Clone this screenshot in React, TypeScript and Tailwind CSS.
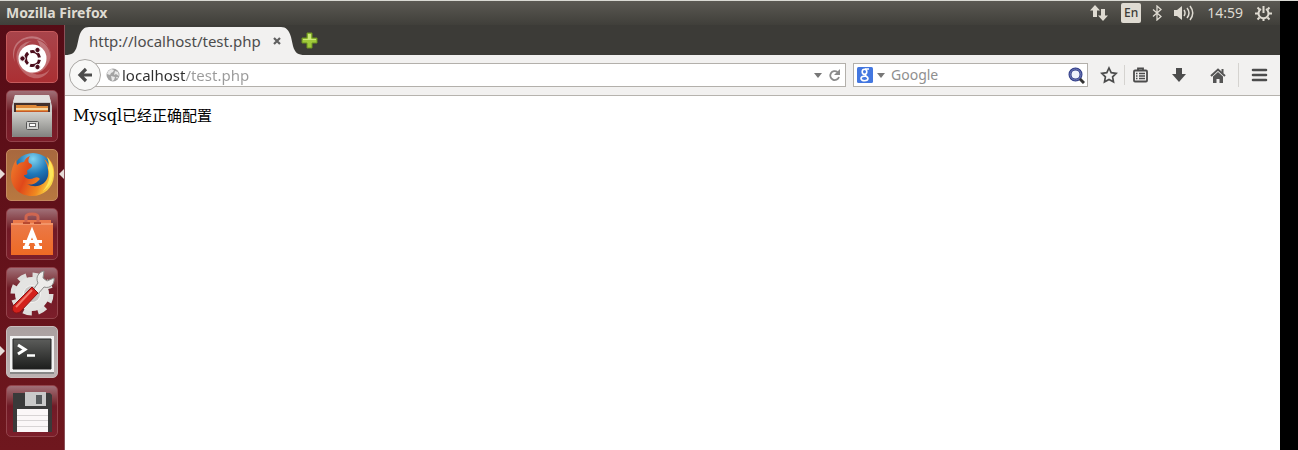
import type { ReactNode } from 'react';

const tileBase = 'relative flex h-13 w-13 items-center justify-center rounded-[5px] border';
const glass = `${tileBase} border-[#93434b] bg-linear-to-b from-[#a07078] via-[#701a26] via-40% to-[#7c1e2a]`;

const launcherItems: { label: string; tile: string; marks?: 'left' | 'both'; icon: ReactNode }[] = [
  {
    label: 'Search your computer',
    tile: `${tileBase} border-[#c65a5c] bg-linear-to-b from-[#a8444b] to-[#ab2f33]`,
    icon: (
      <svg width="50" height="50" viewBox="0 0 50 50" fill="none" aria-hidden="true">
        {/* Swirl */}
        <path d="M8 30C4 15 14 4 29 7c12 2 18 13 13 25C48 16 35 1 20 5 8 8 3 19 8 30Z" fill="#fff" opacity=".28" />
        <path d="M13 36C5 24 11 10 25 9c-10 3-13 15-5 27 5 8 16 9 23 1-7 14-23 11-30-1Z" fill="#fff" opacity=".25" />
        <path d="M30 8c12 3 18 17 9 27-5 7-14 8-21 4 14 2 22-16 12-31Z" fill="#fff" opacity=".28" />
        <circle cx="25.500" cy="26.500" r="14" fill="#fff" />
        {/* Circle of friends */}
        <circle cx="25.500" cy="26.500" r="7" stroke="#4b0d1c" strokeWidth="3" strokeDasharray="12.200 2.460" strokeDashoffset="-1.200" />
        <g fill="#4b0d1c" stroke="#fff" strokeWidth="1">
          <circle cx="15.500" cy="26.500" r="2.700" />
          <circle cx="30.500" cy="18" r="2.700" />
          <circle cx="30.500" cy="35" r="2.700" />
        </g>
      </svg>
    ),
  },
  {
    label: 'Files',
    tile: glass,
    icon: (
      <svg width="50" height="50" viewBox="0 0 50 50" aria-hidden="true">
        <defs>
          <linearGradient id="cabinet" x1="0" y1="0" x2="0" y2="1">
            <stop offset="0" stopColor="#d0d0cc" />
            <stop offset="1" stopColor="#82827f" />
          </linearGradient>
        </defs>
        <path d="M8 4h34l3 11v31H5V15Z" fill="#c9c7c6" />
        <path d="M8 4h34l2 7H6Z" fill="#e2e0df" />
        <path d="M7 12h36v10H7Z" fill="#43302c" />
        <path d="M9 14h20l1 1h11v7H9Z" fill="#df8a3a" />
        <path d="M9 17h32v2H9Z" fill="#f5d7a4" />
        <path d="M9 20h32v2H9Z" fill="#c65a28" />
        <rect x="5" y="21" width="40" height="25" rx="1" fill="url(#cabinet)" />
        <rect x="19.500" y="30.500" width="12" height="8" rx="1" fill="#d4d4d2" stroke="#555" />
        <rect x="22.500" y="32.500" width="6" height="3" fill="#fff" stroke="#666" />
      </svg>
    ),
  },
  {
    label: 'Firefox',
    tile: `${tileBase} border-[#c58a60] bg-linear-to-b from-[#a8683e] to-[#b87840]`,
    marks: 'both',
    icon: (
      <svg width="50" height="50" viewBox="0 0 50 50" aria-hidden="true">
        <defs>
          <radialGradient id="globe" cx=".5" cy=".15" r=".75">
            <stop offset="0" stopColor="#7fd4f0" />
            <stop offset=".5" stopColor="#1f78b8" />
            <stop offset="1" stopColor="#123a78" />
          </radialGradient>
          <linearGradient id="fox" x1="0" y1=".2" x2="1" y2=".6">
            <stop offset="0" stopColor="#ee7a2a" />
            <stop offset=".4" stopColor="#e0481a" />
            <stop offset=".75" stopColor="#f08a20" />
            <stop offset="1" stopColor="#fbe04a" />
          </linearGradient>
        </defs>
        <circle cx="26" cy="23" r="20" fill="url(#globe)" />
        {/* Fox body and tail */}
        <path d="M40 7c5 4 8 10 7 19-1 12-10 20-22 20C12 46 4 37 4 26c0-6 2-11 5-16l1 5c2-2 4-3 7-3 1-3 3-5 6-6-2 3-2 5-1 7 2 1 3 1 3 3 0 2-4 3-5 5 1 3 0 4-3 4 0 2 3 4 6 4 4 0 6-3 9-1 2 1-1 3-2 4-4 3-7 3-10 2 9 5 19 1 21-8 1-6-1-13-4-17 3 2 4 4 5 7 1-4 0-6-2-9Z" fill="url(#fox)" />
        <path d="M40 7c4 4 7 10 6 18-1 8-5 13-10 16 6-7 8-15 5-23 1-4 1-7-1-11Z" fill="#fde65a" />
      </svg>
    ),
  },
  {
    label: 'Ubuntu Software Center',
    tile: glass,
    icon: (
      <svg width="50" height="50" viewBox="0 0 50 50" fill="none" aria-hidden="true">
        <defs>
          <linearGradient id="bag" x1="0" y1="0" x2="0" y2="1">
            <stop offset="0" stopColor="#ea7a4c" />
            <stop offset="1" stopColor="#ee6a24" />
          </linearGradient>
        </defs>
        <path d="M6 11h38v3h2v32H4V14h2Z" fill="url(#bag)" />
        <path d="M4 14h42v2H4Z" fill="#f29468" />
        <path d="M19 15V8c0-4 12-4 12 0v7" stroke="#cf6650" strokeWidth="3" />
        <path d="M16 14h7M27 14h7" stroke="#b84a30" strokeWidth="2" />
        <path d="m19 38 6-15 6 15" stroke="#fff" strokeWidth="4" />
        <path d="M16 31h19v3H16ZM16 37h7v3h-7ZM27 37h8v3h-8Z" fill="#fff" />
      </svg>
    ),
  },
  {
    label: 'System Settings',
    tile: glass,
    icon: (
      <svg width="50" height="50" viewBox="0 0 50 50" fill="none" aria-hidden="true">
        <circle cx="25" cy="26" r="18" stroke="#dededc" strokeWidth="7" strokeDasharray="8.137 6" />
        <circle cx="25" cy="26" r="13" fill="#f2f2f0" stroke="#e4e4e2" strokeWidth="8" />
        <circle cx="25" cy="26" r="8" fill="#c9c6c5" />
        {/* Wrench */}
        <path d="m26 22 5-7c-3-6 1-11 6-12l-1 7 4 3 7-3c1 6-4 11-10 9l-6 7Z" fill="#ececea" stroke="#8c8c8a" />
        <path d="m25 19 6 6L13 44c-5 3-9-1-7-6Z" fill="#d3211c" stroke="#8e1414" />
        <path d="M25 22 9 39" stroke="#f37a6c" strokeWidth="2" />
      </svg>
    ),
  },
  {
    label: 'Terminal',
    tile: `${tileBase} border-[#c9bcbc] bg-linear-to-b from-[#aaa0a0] to-[#bdb3b3]`,
    marks: 'left',
    icon: (
      <svg width="50" height="50" viewBox="0 0 50 50" fill="none" aria-hidden="true">
        <defs>
          <linearGradient id="screen" x1="0" y1="0" x2="0" y2="1">
            <stop offset="0" stopColor="#5c5d5b" />
            <stop offset="1" stopColor="#1d1e1d" />
          </linearGradient>
        </defs>
        <path d="M3 44h44v3H3Z" fill="#888" />
        <path d="M3 9h44v36H3Z" fill="#f2f2f2" />
        <path d="M6 12h38v30H6Z" fill="url(#screen)" stroke="#222" />
        <path d="m11 18 7 4.500L11 27" stroke="#fff" strokeWidth="3" />
        <path d="M20 28.500h8" stroke="#fff" strokeWidth="2.500" />
      </svg>
    ),
  },
  {
    label: 'Floppy Disk',
    tile: glass,
    icon: (
      <svg width="50" height="50" viewBox="0 0 50 50" aria-hidden="true">
        <path d="M6 7h37l2 2v37H6Z" fill="#3a3a3a" />
        <path d="M18 6h21v14H18Z" fill="#c9c9c9" />
        <path d="M29 9h6v9h-6Z" fill="#565a5c" />
        <path d="M10 23h31v23H10Z" fill="#fbf7f8" />
        <path d="M10 29.500h31M10 34.500h31M10 40.500h31" stroke="#d8d4d5" />
      </svg>
    ),
  },
];

function TopPanel() {
  return (
    <header className="flex h-6 items-center justify-between bg-linear-to-b from-[#5b5953] to-[#403f3a] pr-2 pl-1.5 text-[#dfdbd2]">
      <h1 className="text-[14px] leading-5 font-bold">Mozilla Firefox</h1>
      <div className="flex items-center text-[14px] leading-5">
        <button aria-label="Network" className="mr-3">
          <svg width="20" height="18" viewBox="0 0 20 18" fill="currentColor" className="block">
            <path d="M6 1 11 6.500H8V13H4V6.500H1ZM14 17 9 11.500h3V5h4v6.500h3Z" />
          </svg>
        </button>
        <button className="mr-2 h-5 w-5 rounded-xs bg-[#dfdbd2] text-[12px] leading-5 font-medium text-[#3c3b37]">En</button>
        <button aria-label="Bluetooth" className="mr-2">
          <svg width="16" height="16" viewBox="0 0 16 16" fill="none" stroke="currentColor" strokeWidth="1.300" className="block">
            <path d="m4 4.500 8 7L8 15V1l4 3.500-8 7" />
          </svg>
        </button>
        <button aria-label="Volume" className="mr-3">
          <svg width="22" height="18" viewBox="0 0 22 18" fill="none" stroke="currentColor" strokeWidth="1.500" className="block">
            <path d="M1 6h3l5-4v14l-5-4H1Z" fill="currentColor" stroke="none" />
            <path d="M11 6q2 3 0 6M14 4q4 5 0 10M17 2q5.500 7 0 14" />
          </svg>
        </button>
        <time className="mr-3">14:59</time>
        <button aria-label="Session">
          <svg width="17" height="16" viewBox="0 0 17 16" fill="none" stroke="currentColor" strokeWidth="2" className="block">
            <path d="M6 4a5 5 0 1 0 5 0M8.500 1v7" />
            <path d="M0 8.500h3M14 8.500h3M2.500 2.500l2 2M14.500 2.500l-2 2M2.500 14.500l2-2M14.500 14.500l-2-2M8.500 13v3" />
          </svg>
        </button>
      </div>
    </header>
  );
}

function Launcher() {
  return (
    <nav aria-label="Launcher" className="w-[65px] shrink-0 border-r border-[#8a5058] bg-linear-to-b from-[#560c16] to-[#6f171e] pt-1.5">
      <ul className="flex flex-col gap-[7px]">
        {launcherItems.map(({ label, tile, marks, icon }) => (
          <li key={label} className="relative px-1.5">
            <button aria-label={label} className={tile}>{icon}</button>
            {marks && (
              <svg width="5" height="10" viewBox="0 0 5 10" fill="#e6dcd8" className="absolute top-5 left-0" aria-hidden="true">
                <path d="M0 0 5 5 0 10Z" />
              </svg>
            )}
            {marks === 'both' && (
              <svg width="5" height="10" viewBox="0 0 5 10" fill="#e6dcd8" className="absolute top-5 right-0" aria-hidden="true">
                <path d="M5 0v10L0 5Z" />
              </svg>
            )}
          </li>
        ))}
      </ul>
    </nav>
  );
}

function TabStrip() {
  return (
    <div className="flex h-[30px] items-end bg-[#3c3b37]">
      <div className="flex h-7 items-stretch">
        <svg width="24" height="28" viewBox="0 0 24 28" fill="#f2f1f0" aria-hidden="true">
          <path d="M0 28c7 0 10-2 12-9l2-9C16 3 19 0 24 0v28Z" />
        </svg>
        <div className="flex items-center gap-3 bg-[#f2f1f0]">
          <span className="text-[15px] leading-5 text-[#4c4c4c]">http://localhost/test.php</span>
          <button aria-label="Close tab">
            <svg width="8" height="8" viewBox="0 0 8 8" stroke="#606060" strokeWidth="2.200" className="block">
              <path d="m1 1 6 6M7 1 1 7" />
            </svg>
          </button>
        </div>
        <svg width="24" height="28" viewBox="0 0 24 28" fill="#f2f1f0" aria-hidden="true">
          <path d="M24 28c-7 0-10-2-12-9l-2-9C8 3 5 0 0 0v28Z" />
        </svg>
      </div>
      <button aria-label="New tab" className="-ml-1 self-center">
        <svg width="17" height="17" viewBox="0 0 17 17" className="block">
          <path d="M6 1h5v5h5v5h-5v5H6v-5H1V6h5Z" fill="#9fc93a" stroke="#6d9420" />
          <path d="M7 2h3v5h5v1H2V7h5Z" fill="#cbe876" />
        </svg>
      </button>
    </div>
  );
}

function NavBar() {
  return (
    <div className="flex h-[41px] items-center border-b border-[#b6b3ae] bg-[#f2f1f0] pr-2 pl-1 text-[#4c4c4c]">
      <button aria-label="Back" className="z-10 flex h-8 w-8 shrink-0 items-center justify-center rounded-full border border-[#a9a7a4] bg-[#f8f8f7]">
        <svg width="16" height="16" viewBox="0 0 16 16" fill="none" stroke="#4c4c4c" strokeWidth="3.200">
          <path d="M9 2 3 8l6 6M3.500 8H15" />
        </svg>
      </button>
      <form className="-ml-2 flex h-6 flex-1 items-center border border-[#b3b0ab] bg-white pr-1 pl-3" onSubmit={(e) => e.preventDefault()}>
        <svg width="14" height="14" viewBox="0 0 14 14" className="shrink-0" aria-hidden="true">
          <circle cx="7" cy="7" r="6.500" fill="#a3a3a3" />
          <path d="M2 3.500 5 1l3 1-1 2-2 1-1 2-3-1ZM9 3l3 1 1 4-3-2-2 1ZM5 8l4 1-1 3-2 1ZM10 9l2 0-1 2Z" fill="#e9e9e9" />
        </svg>
        {/* Domain is darker than the path */}
        <input
          aria-label="Address"
          defaultValue="localhost/test.php"
          spellCheck={false}
          className="ml-0.5 min-w-0 flex-1 bg-linear-to-r from-[#2e2e2e] from-[64px] to-[#9a9a9a] to-[64px] bg-clip-text text-[15px] leading-5 text-transparent caret-black outline-none"
        />
        <button type="button" aria-label="History" className="mr-1.5">
          <svg width="8" height="5" viewBox="0 0 8 5" fill="#777" className="block"><path d="M0 0h8L4 5Z" /></svg>
        </button>
        <button type="button" aria-label="Reload">
          <svg width="13" height="13" viewBox="0 0 13 13" fill="none" className="block">
            <path d="M9.500 3A4.500 4.500 0 1 0 11 8" stroke="#8b8b8b" strokeWidth="1.800" />
            <path d="M12 0v6H6Z" fill="#8b8b8b" />
          </svg>
        </button>
      </form>
      <form className="ml-[7px] flex h-6 w-[235px] shrink-0 items-center border border-[#b3b0ab] bg-white pr-0.5 pl-[3px]" onSubmit={(e) => e.preventDefault()}>
        <button type="button" aria-label="Search engine" className="flex items-center gap-1">
          <svg width="16" height="16" viewBox="0 0 16 16" fill="none" stroke="#fff">
            <rect width="16" height="16" rx="1.500" fill="#4377e0" stroke="none" />
            <ellipse cx="7.500" cy="4.800" rx="2.300" ry="2.600" strokeWidth="1.600" />
            <path d="M8 2h4M9 7.500c-2 1.500 2 2 2 4 0 3-7 3-7 0 0-2 3-2.500 5-2.500" strokeWidth="1.600" />
          </svg>
          <svg width="8" height="5" viewBox="0 0 8 5" fill="#777"><path d="M0 0h8L4 5Z" /></svg>
        </button>
        <input aria-label="Search" placeholder="Google" className="ml-1.5 min-w-0 flex-1 text-[14px] leading-5 outline-none placeholder:text-[#8f8f8f]" />
        <button aria-label="Submit search">
          <svg width="17" height="17" viewBox="0 0 17 17" fill="none" className="block">
            <circle cx="7.500" cy="7.500" r="5.500" fill="#eef2fb" stroke="#2d3a86" strokeWidth="3" />
            <circle cx="7.500" cy="7.500" r="5.500" stroke="#7883bd" strokeWidth="1" />
            <path d="m12 12 4 4" stroke="#333" strokeWidth="3" />
          </svg>
        </button>
      </form>
      <div className="flex shrink-0 items-center">
        <button aria-label="Bookmark this page" className="ml-3 mr-1.5">
          <svg width="18" height="18" viewBox="0 0 18 18" fill="none" stroke="#4c4c4c" strokeWidth="1.700" className="block">
            <path d="m9 2 2.200 4.600 5 .7-3.600 3.500.9 5L9 13.400l-4.500 2.400.9-5L1.800 7.300l5-.7Z" />
          </svg>
        </button>
        <span className="h-5 w-px bg-[#d5d3d0]" />
        <button aria-label="Show bookmarks" className="ml-2 mr-6">
          <svg width="15" height="16" viewBox="0 0 15 16" fill="none" className="block">
            <path d="M5 3V1.500h5V3" stroke="#4c4c4c" strokeWidth="1.800" />
            <rect x="1" y="3.500" width="13" height="11" rx="1" stroke="#4c4c4c" strokeWidth="1.800" />
            <path d="M3 6.500h1.500M3 9h1.500M3 11.500h1.500M6 6.500h6M6 9h6M6 11.500h6" stroke="#4c4c4c" strokeWidth="1.300" />
          </svg>
        </button>
        <button aria-label="Downloads" className="mr-6">
          <svg width="14" height="14" viewBox="0 0 14 14" fill="#4c4c4c" className="block">
            <path d="M4 0h6v6h4l-7 8-7-8h4Z" />
          </svg>
        </button>
        <button aria-label="Home" className="mr-3">
          <svg width="16" height="15" viewBox="0 0 16 15" fill="none" stroke="#555" className="block">
            <path d="m1 8 7-6.500L15 8" strokeWidth="2" />
            <path d="M3 8.500 8 4l5 4.500V15H9.500v-4h-3v4H3Z" fill="#555" stroke="none" />
            <path d="M12.500 1v4" strokeWidth="2" />
          </svg>
        </button>
        <span className="h-6 w-px bg-[#d5d3d0]" />
        <button aria-label="Open menu" className="mr-1 ml-3">
          <svg width="17" height="14" viewBox="0 0 17 14" stroke="#4c4c4c" strokeWidth="2.600" strokeLinecap="round" className="block">
            <path d="M2 2h13M2 7h13M2 12h13" />
          </svg>
        </button>
      </div>
    </div>
  );
}

export default function App() {
  return (
    <div className="flex min-h-screen flex-col border-t border-[#d9d9d3] bg-black font-['Noto_Sans',sans-serif]">
      <div className="mr-[18px] flex flex-1 flex-col">
        <TopPanel />
        <div className="flex flex-1">
          <Launcher />
          <div className="flex min-w-0 flex-1 flex-col">
            <TabStrip />
            <NavBar />
            <main className="flex-1 bg-white p-2">
              <p className="font-['DejaVu_Serif','Noto_Sans_CJK_SC',serif] text-base text-black">
                Mysql<span className="text-[15px]">已经正确配置</span>
              </p>
            </main>
          </div>
        </div>
      </div>
    </div>
  );
}
